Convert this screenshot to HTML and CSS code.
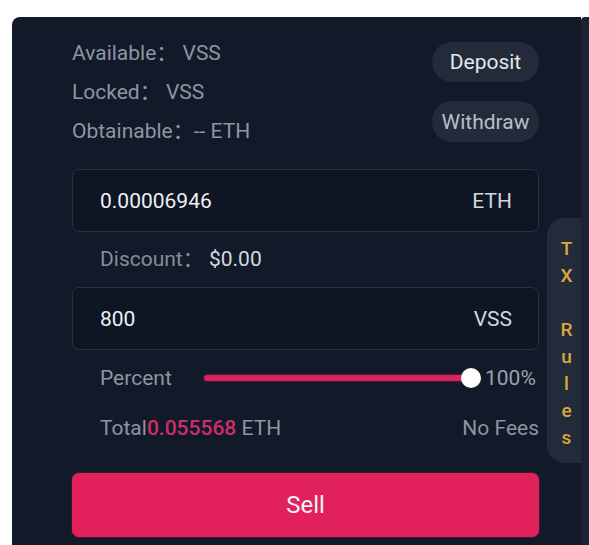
FILE: index.html
```html
<!DOCTYPE html>
<html>
<head>
<meta charset="utf-8">
<link rel="stylesheet" href="styles.css">
</head>
<body>
<div class="wrap">
  <div class="panel">
    <div class="top">
      <div class="info">
        <div class="line">Available<span class="colon">：</span> VSS</div>
        <div class="line">Locked<span class="colon">：</span> VSS</div>
        <div class="line">Obtainable<span class="colon">：</span>-- ETH</div>
      </div>
      <div class="actions">
        <div class="pill pill-deposit">Deposit</div>
        <div class="pill pill-withdraw">Withdraw</div>
      </div>
    </div>
    <div class="field first">
      <span class="value">0.00006946</span>
      <span class="unit">ETH</span>
    </div>
    <div class="discount">Discount<span class="colon">：</span> <span class="dval">$0.00</span></div>
    <div class="field">
      <span class="value">800</span>
      <span class="unit">VSS</span>
    </div>
    <div class="percent">
      <span class="plabel">Percent</span>
      <div class="slider">
        <div class="track"></div>
        <div class="thumb"></div>
      </div>
      <span class="pval">100%</span>
    </div>
    <div class="total">
      <span>Total<span class="amount">0.055568</span> ETH</span>
      <span>No Fees</span>
    </div>
    <div class="sell">Sell</div>
    <div class="rules">
      <span>T</span><span>X</span><span></span><span>R</span><span>u</span><span>l</span><span>e</span><span>s</span>
    </div>
  </div>
  <div class="strip"></div>
</div>
</body>
</html>
```

FILE: styles.css
```css
html, body {
  margin: 0;
  padding: 0;
  background: #ffffff;
}
body {
  font-family: Roboto, "Noto Sans", "Noto Sans CJK SC", sans-serif;
  font-size: 21px;
}
.wrap {
  display: flex;
  padding: 17px 0 0 12px;
  height: 545px;
  box-sizing: border-box;
}
.panel {
  position: relative;
  width: 569px;
  box-sizing: border-box;
  background: #121a29;
  border-top-left-radius: 8px;
  padding: 15px 42px 0 60px;
}
.strip {
  width: 8px;
  background: #1b2332;
  border-top-left-radius: 4px;
}
.top {
  display: flex;
  justify-content: space-between;
}
.info {
  color: #8d95a2;
  padding-top: 2px;
}
.line {
  height: 39px;
  line-height: 39px;
  white-space: nowrap;
}
.colon {
  font-family: "Noto Sans CJK SC", sans-serif;
  line-height: 1;
}
.actions {
  display: flex;
  flex-direction: column;
  gap: 19px;
  padding-top: 10px;
}
.pill {
  width: 107px;
  height: 40px;
  border-radius: 20px;
  background: #232b3a;
  display: flex;
  align-items: center;
  justify-content: center;
}
.pill-deposit {
  color: #e3e6ea;
}
.pill-withdraw {
  color: #b9bec7;
  height: 41px;
}
.field {
  height: 63px;
  box-sizing: border-box;
  border: 1px solid #283142;
  border-radius: 7px;
  background: #0e1523;
  display: flex;
  align-items: center;
  justify-content: space-between;
  padding: 0 26px 0 27px;
  color: #eef0f3;
}
.field.first {
  margin-top: 18px;
}
.unit {
  color: #d3d7dd;
}
.discount {
  height: 55px;
  line-height: 55px;
  padding-left: 28px;
  color: #858d9a;
}
.dval {
  color: #d4d8de;
}
.percent {
  height: 56px;
  display: flex;
  align-items: center;
  padding-left: 28px;
  color: #8d95a2;
}
.plabel {
  width: 104px;
}
.slider {
  position: relative;
  flex: 1;
  height: 20px;
  display: flex;
  align-items: center;
  margin-right: 14px;
}
.track {
  flex: 1;
  height: 6px;
  border-radius: 3px;
  background: #d9235f;
  box-shadow: 0 0 3px rgba(217, 35, 95, 0.6);
}
.thumb {
  position: absolute;
  right: -10px;
  top: 0;
  width: 20px;
  height: 20px;
  border-radius: 50%;
  background: #ffffff;
}
.pval {
  color: #9aa1ad;
  width: 54px;
  text-align: left;
}
.total {
  height: 44px;
  display: flex;
  align-items: center;
  justify-content: space-between;
  padding-left: 28px;
  color: #8d95a2;
}
.amount {
  color: #cc2f68;
  font-weight: 500;
}
.sell {
  margin-top: 23px;
  height: 64px;
  border-radius: 7px;
  background: #e2205b;
  color: #f3f3f6;
  font-size: 24px;
  display: flex;
  align-items: center;
  justify-content: center;
  box-shadow: 0 0 2px rgba(226, 32, 91, 0.6);
}
.rules {
  position: absolute;
  left: 535px;
  top: 201px;
  width: 34px;
  height: 245px;
  box-sizing: border-box;
  background: #222b3a;
  border-radius: 18px 0 0 18px;
  padding: 17px 0 0 5px;
  display: flex;
  flex-direction: column;
  align-items: center;
  color: #dba73d;
  font-size: 19px;
  font-weight: 500;
}
.rules span {
  height: 27px;
  line-height: 27px;
}
```
